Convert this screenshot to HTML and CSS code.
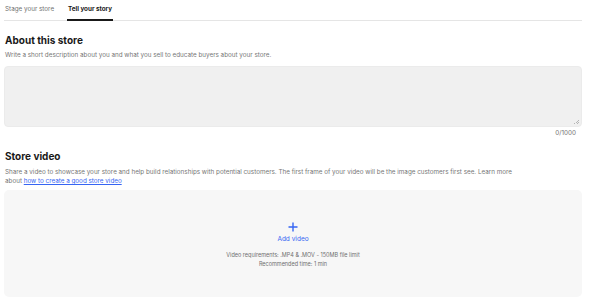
FILE: index.html
```html
<!DOCTYPE html>
<html lang="en">
<head>
  <meta charset="UTF-8" />
  <title>Tell your story</title>
  <link rel="stylesheet" href="styles.css">
</head>
<body>
  <div class="tabs">
    <div class="tab">Stage your store</div>
    <div class="tab active">Tell your story</div>
  </div>

  <h2 class="section-title about-title">About this store</h2>
  <p class="hint">Write a short description about you and what you sell to educate buyers about your store.</p>
  <textarea class="story-input"></textarea>
  <div class="counter">0/1000</div>

  <h2 class="section-title video-title">Store video</h2>
  <p class="hint video-hint">Share a video to showcase your store and help build relationships with potential customers. The first frame of your video will be the image customers first see. Learn more about <a href="#">how to create a good store video</a></p>

  <div class="video-drop">
    <svg class="plus" width="10" height="10" viewBox="0 0 10 10">
      <path d="M5 0.5v9M0.5 5h9" stroke="#3665f3" stroke-width="1.4" fill="none"/>
    </svg>
    <div class="add-video">Add video</div>
    <div class="reqs">Video requirements: .MP4 &amp; .MOV - 150MB file limit<br>Recommended time: 1 min</div>
  </div>
</body>
</html>
```

FILE: styles.css
```css
body {
  margin: 0;
  padding: 0 7px 0 4px;
  font-family: Inter, "Liberation Sans", sans-serif;
  color: #191919;
  background: #fff;
}
.tabs {
  display: flex;
  gap: 13px;
  padding-left: 1px;
  border-bottom: 1px solid #e5e5e5;
  font-size: 6.3px;
  height: 20px;
}
.tab {
  color: #707070;
  padding-top: 5px;
}
.tab.active {
  color: #191919;
  font-weight: 700;
  border-bottom: 2px solid #191919;
  margin-bottom: -1px;
  padding: 5px 1px 0;
}
.section-title {
  font-size: 10px;
  font-weight: 700;
  margin: 0;
  padding-left: 1px;
}
.about-title { margin-top: 13px; }
.video-title { margin-top: 13px; }
.hint {
  font-size: 6.3px;
  color: #767676;
  margin: 5px 0 0 1px;
  line-height: 9px;
}
.video-hint {
  max-width: 518px;
  margin-top: 6px;
}
.hint a {
  color: #3665f3;
  text-underline-offset: 1px;
}
.story-input {
  display: block;
  box-sizing: border-box;
  width: 100%;
  height: 61px;
  margin-top: 6px;
  resize: none;
  background-color: #f0f0f0;
  background-image:
    linear-gradient(135deg, transparent 50%, #b5b5b5 50%, #b5b5b5 60%, transparent 60%, transparent 75%, #b5b5b5 75%, #b5b5b5 85%, transparent 85%);
  background-size: 5px 5px;
  background-position: right 2px bottom 2px;
  background-repeat: no-repeat;
  border: 1px solid #ebebeb;
  border-radius: 4px;
}
.counter {
  text-align: right;
  font-size: 6.3px;
  color: #707070;
  padding-right: 6px;
  margin-top: 2px;
}
.video-drop {
  margin-top: 4px;
  height: 107px;
  background: #f7f7f7;
  border-radius: 5px;
  display: flex;
  flex-direction: column;
  align-items: center;
  padding-top: 32px;
  box-sizing: border-box;
}
.add-video {
  color: #3665f3;
  font-size: 6.5px;
  margin-top: 3px;
}
.reqs {
  margin-top: 8px;
  font-size: 5.5px;
  line-height: 9px;
  text-align: center;
  color: #707070;
}
```
